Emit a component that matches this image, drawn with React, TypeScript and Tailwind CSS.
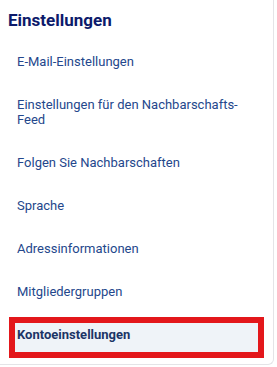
const items = [
  "E-Mail-Einstellungen",
  "Einstellungen für den Nachbarschafts-Feed",
  "Folgen Sie Nachbarschaften",
  "Sprache",
  "Adressinformationen",
  "Mitgliedergruppen",
];

export default function App() {
  return (
    <div className="h-[367px] w-[277px] overflow-hidden bg-white font-['Roboto',sans-serif]">
      <div className="h-[365px] w-[274px] rounded-br-md border-r border-b border-[#e4e4e7] bg-white">
        {/* header */}
        <h2 className="pl-2 pt-[10px] text-[17px] font-bold leading-[20px] text-[#0c1a6b]">
          Einstellungen
        </h2>

        {/* menu */}
        <ul className="mt-[10px]">
          {items.map((label) => (
            <li
              key={label}
              className="py-[14px] pl-[17px] pr-[30px] text-[13px] leading-[15px] text-[#24478c]"
            >
              {label}
            </li>
          ))}
          <li className="ml-[9px] mt-[4px] h-[41px] w-[255px] border-[6px] border-[#e3171b] bg-[#eff3f8] pl-[2px] pt-[4px] text-[13px] font-bold leading-[15px] text-[#1c3566]">
            Kontoeinstellungen
          </li>
        </ul>
      </div>
    </div>
  );
}
